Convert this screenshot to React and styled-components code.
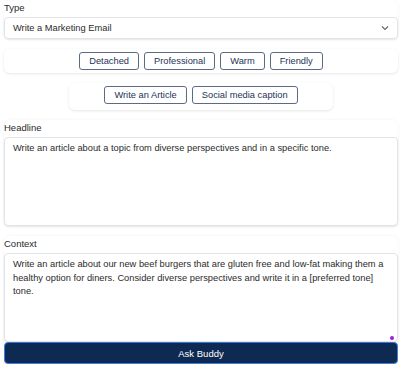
import React, { useState } from 'react';
import styled, { createGlobalStyle } from 'styled-components';

const GlobalStyle = createGlobalStyle`
body {
  margin: 0;
  background: #ffffff;
  font-family: "Liberation Sans", Arial, sans-serif;
  color: #2b2b2b;
}
`;

const Page = styled.div`
padding: 0 4px;
display: flex;
flex-direction: column;
`;

const FieldCard = styled.div`
background: #fff;
border-radius: 6px;
box-shadow: 0 0 3px rgba(0, 0, 0, 0.06);
display: flex;
flex-direction: column;
margin-top: ${p => p.$top || 0}px;
`;

const Label = styled.label`
font-size: 9.5px;
line-height: 12px;
padding: 2px 0 3px 0;
color: #2b2b2b;
`;

const SelectBox = styled.div`
height: 22px;
box-sizing: border-box;
border: 1px solid #e3e4e8;
border-radius: 4px;
box-shadow: 0 1px 2px rgba(0, 0, 0, 0.08);
display: flex;
align-items: center;
justify-content: space-between;
padding: 0 8px 0 8px;
font-size: 9.3px;
color: #2b2b2b;
`;

const ToneCard = styled.div`
background: #fff;
border-radius: 6px;
box-shadow: 0 1px 3px rgba(0, 0, 0, 0.1);
display: flex;
justify-content: center;
gap: 5px;
padding: 3px ${p => p.$side || 0}px ${p => p.$bottom || 3}px;
margin: ${p => p.$top}px auto 0 auto;
width: ${p => (p.$full ? '100%' : 'auto')};
box-sizing: border-box;
`;

const Chip = styled.button`
height: 18px;
box-sizing: border-box;
padding: 0 9px;
border: 1px solid #5b6b85;
border-radius: 3px;
background: #fff;
color: #1d3357;
font-family: inherit;
font-size: 9.3px;
cursor: pointer;
`;

const Area = styled.textarea`
height: ${p => p.$h}px;
box-sizing: border-box;
border: 1px solid #e3e4e8;
border-radius: 4px;
box-shadow: 0 1px 2px rgba(0, 0, 0, 0.08);
padding: 4px 8px;
font-family: inherit;
font-size: 9.3px;
line-height: 13.5px;
color: #2b2b2b;
resize: none;
outline: none;
`;

const AreaWrap = styled.div`
position: relative;
display: flex;
flex-direction: column;
`;

const Dot = styled.span`
position: absolute;
right: 4px;
bottom: 2px;
width: 4px;
height: 4px;
border-radius: 50%;
background: #9b1fe0;
`;

const AskButton = styled.button`
height: 22px;
box-sizing: border-box;
border: 1px solid #3f7fe0;
border-radius: 4px;
background: #0f2a52;
color: #fff;
font-family: inherit;
font-size: 9.5px;
font-weight: 500;
cursor: pointer;
`;

const tones = ['Detached', 'Professional', 'Warm', 'Friendly'];
const formats = ['Write an Article', 'Social media caption'];

export default function App() {
  const [headline, setHeadline] = useState(
    'Write an article about a topic from diverse perspectives and in a specific tone.'
  );
  const [context, setContext] = useState(
    'Write an article about our new beef burgers that are gluten free and low-fat making them a healthy option for diners. Consider diverse perspectives and write it in a [preferred tone] tone.'
  );
  return (
    <Page>
      <GlobalStyle />
      <FieldCard>
        <Label>Type</Label>
        <SelectBox>
          <span>Write a Marketing Email</span>
          <svg width="8" height="6" viewBox="0 0 8 6">
            <path d="M1 1.5 L4 4.5 L7 1.5" fill="none" stroke="#666" strokeWidth="1.1" />
          </svg>
        </SelectBox>
      </FieldCard>
      <ToneCard $full $top={10}>
        {tones.map(t => <Chip key={t}>{t}</Chip>)}
      </ToneCard>
      <ToneCard $side={35} $bottom={6} $top={10}>
        {formats.map(t => <Chip key={t}>{t}</Chip>)}
      </ToneCard>
      <FieldCard $top={10}>
        <Label>Headline</Label>
        <Area $h={89} value={headline} onChange={e => setHeadline(e.target.value)} />
      </FieldCard>
      <FieldCard $top={10}>
        <Label>Context</Label>
        <AreaWrap>
          <Area $h={89} value={context} onChange={e => setContext(e.target.value)} />
          <Dot />
        </AreaWrap>
        <AskButton>Ask Buddy</AskButton>
      </FieldCard>
    </Page>
  );
}
